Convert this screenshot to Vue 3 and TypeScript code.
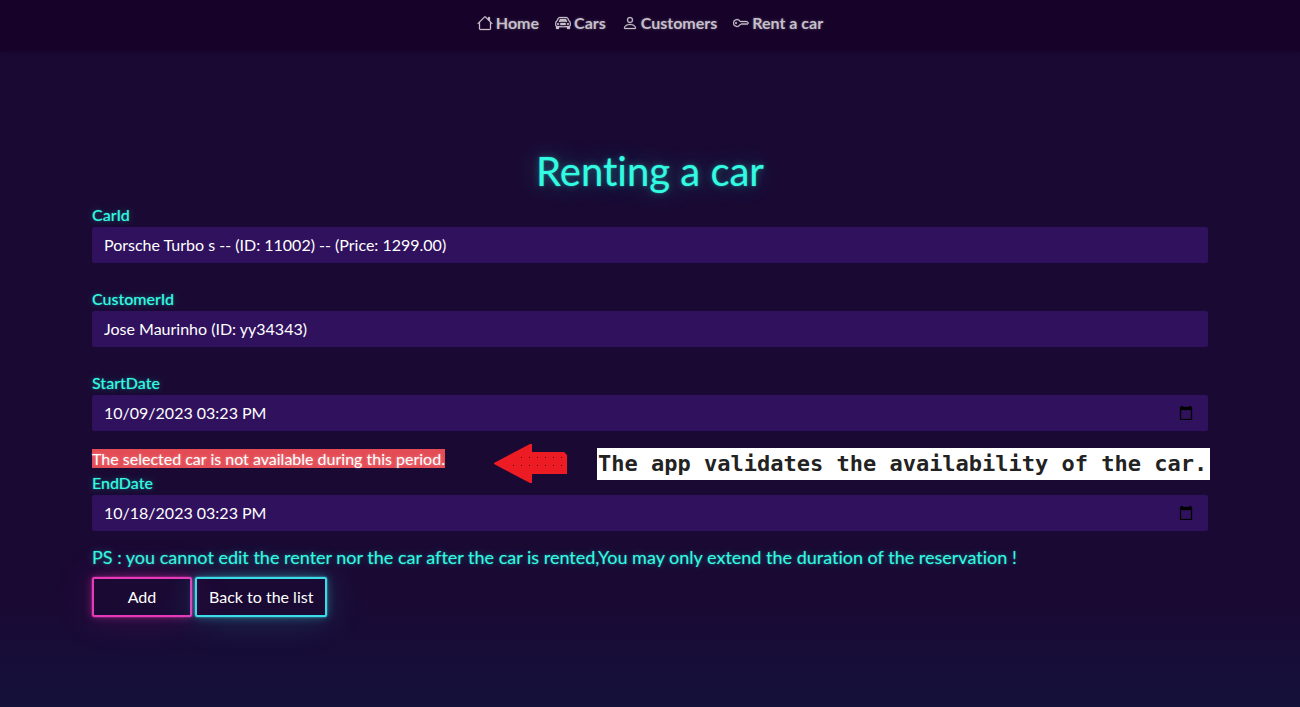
<script setup lang="ts">
import { ref } from 'vue'

interface NavItem {
  label: string
  paths: string[]
}

const navItems: NavItem[] = [
  {
    label: 'Home',
    paths: [
      'M8.707 1.5a1 1 0 0 0-1.414 0L.646 8.146a.5.5 0 0 0 .708.708L2 8.207V13.5A1.5 1.5 0 0 0 3.5 15h9a1.5 1.5 0 0 0 1.5-1.5V8.207l.646.647a.5.5 0 0 0 .708-.708L13 5.793V2.5a.5.5 0 0 0-.5-.5h-1a.5.5 0 0 0-.5.5v1.293L8.707 1.5ZM13 7.207V13.5a.5.5 0 0 1-.5.5h-9a.5.5 0 0 1-.5-.5V7.207l5-5 5 5Z',
    ],
  },
  {
    label: 'Cars',
    paths: [
      'M4 9a1 1 0 1 1-2 0 1 1 0 0 1 2 0Zm10 0a1 1 0 1 1-2 0 1 1 0 0 1 2 0ZM6 8a1 1 0 0 0 0 2h4a1 1 0 1 0 0-2H6ZM4.862 4.276 3.906 6.19a.51.51 0 0 0 .497.731c.91-.073 2.35-.17 3.597-.17 1.247 0 2.688.097 3.597.17a.51.51 0 0 0 .497-.731l-.956-1.913A.5.5 0 0 0 10.691 4H5.309a.5.5 0 0 0-.447.276Z',
      'M2.52 3.515A2.5 2.5 0 0 1 4.82 2h6.362c1 0 1.904.596 2.298 1.515l.792 1.848c.075.175.21.319.38.404.5.25.855.715.965 1.262l.335 1.679c.033.161.049.325.049.49v.413c0 .814-.39 1.543-1 1.997V13.5a.5.5 0 0 1-.5.5h-2a.5.5 0 0 1-.5-.5v-1.338c-1.292.048-2.745.088-4 .088s-2.708-.04-4-.088V13.5a.5.5 0 0 1-.5.5h-2a.5.5 0 0 1-.5-.5v-1.892c-.61-.454-1-1.183-1-1.997v-.413a2.5 2.5 0 0 1 .049-.49l.335-1.68c.11-.546.465-1.012.964-1.261a.807.807 0 0 0 .381-.404l.792-1.848ZM4.82 3a1.5 1.5 0 0 0-1.379.91l-.792 1.847a1.8 1.8 0 0 1-.853.904.807.807 0 0 0-.43.564L1.03 8.904a1.5 1.5 0 0 0-.03.294v.413c0 .796.62 1.448 1.408 1.484 1.555.07 3.786.155 5.592.155 1.806 0 4.037-.084 5.592-.155A1.479 1.479 0 0 0 15 9.611v-.413c0-.099-.01-.197-.03-.294l-.335-1.68a.807.807 0 0 0-.43-.563 1.807 1.807 0 0 1-.853-.904l-.792-1.848A1.5 1.5 0 0 0 11.18 3H4.82Z',
    ],
  },
  {
    label: 'Customers',
    paths: [
      'M8 8a3 3 0 1 0 0-6 3 3 0 0 0 0 6Zm2-3a2 2 0 1 1-4 0 2 2 0 0 1 4 0Zm4 8c0 1-1 1-1 1H3s-1 0-1-1 1-4 6-4 6 3 6 4Zm-1-.004c-.001-.246-.154-.986-.832-1.664C11.516 10.68 10.289 10 8 10c-2.29 0-3.516.68-4.168 1.332-.678.678-.83 1.418-.832 1.664h10Z',
    ],
  },
  {
    label: 'Rent a car',
    paths: [
      'M0 8a4 4 0 0 1 7.465-2H14a.5.5 0 0 1 .354.146l1.5 1.5a.5.5 0 0 1 0 .708l-1.5 1.5a.5.5 0 0 1-.708 0L13 9.207l-.646.647a.5.5 0 0 1-.708 0L11 9.207l-.646.647a.5.5 0 0 1-.708 0L9 9.207l-.646.647A.5.5 0 0 1 8 10h-.535A4 4 0 0 1 0 8zm4-3a3 3 0 1 0 2.712 4.285A.5.5 0 0 1 7.163 9h.63l.853-.854a.5.5 0 0 1 .708 0l.646.647.646-.647a.5.5 0 0 1 .708 0l.646.647.646-.647a.5.5 0 0 1 .708 0l.646.647.793-.793-1-1h-6.63a.5.5 0 0 1-.451-.285A3 3 0 0 0 4 5z',
      'M4 8a1 1 0 1 1-2 0 1 1 0 0 1 2 0z',
    ],
  },
]

const cars = ['Porsche Turbo s -- (ID: 11002) -- (Price: 1299.00)']
const customers = ['Jose Maurinho (ID: yy34343)']

const carId = ref(cars[0])
const customerId = ref(customers[0])
const startDate = ref('10/09/2023 03:23 PM')
const endDate = ref('10/18/2023 03:23 PM')

// Texture dots on the arrow's shaft
const arrowDots = [
  ...[27, 35, 43, 51, 59, 67].map((x) => ({ x, y: 13 })),
  ...[19, 27, 35, 43, 51, 59, 67].map((x) => ({ x, y: 21 })),
]
</script>

<template>
  <div class="page">
    <nav class="navbar">
      <a v-for="item in navItems" :key="item.label" href="#" class="nav-link">
        <svg class="nav-icon" viewBox="0 0 16 16" aria-hidden="true">
          <path v-for="d in item.paths" :key="d" :d="d" />
        </svg>
        <span>{{ item.label }}</span>
      </a>
    </nav>

    <main class="container">
      <h1>Renting a car</h1>
      <form @submit.prevent>
        <div class="field">
          <label for="car">CarId</label>
          <select id="car" v-model="carId" class="control">
            <option v-for="c in cars" :key="c">{{ c }}</option>
          </select>
        </div>
        <div class="field">
          <label for="customer">CustomerId</label>
          <select id="customer" v-model="customerId" class="control">
            <option v-for="c in customers" :key="c">{{ c }}</option>
          </select>
        </div>
        <div class="field start">
          <label for="start">StartDate</label>
          <div class="control date">
            <input id="start" v-model="startDate" type="text" />
            <button type="button" class="picker" aria-label="Pick start date">
              <svg viewBox="0 0 14 14" aria-hidden="true">
                <path d="M2 0h2v1h6V0h2v1h1v13H1V1h1ZM2 4v9h10V4Z" fill-rule="evenodd" />
              </svg>
            </button>
          </div>
        </div>
        <div class="error-row">
          <span class="error">The selected car is not available during this period.</span>
          <div class="callout">
            <svg class="arrow" viewBox="0 0 74 40" aria-hidden="true">
              <path d="M0 19 36 0h2v8h32l3 3v19H38v9h-2L0 20Z" fill="#ed1c24" />
              <rect v-for="(dot, i) in arrowDots" :key="i" :x="dot.x" :y="dot.y" width="1" height="1" fill="#3a0714" />
            </svg>
            <p class="note">The app validates the availability of the car.</p>
          </div>
        </div>
        <div class="field end">
          <label for="end">EndDate</label>
          <div class="control date">
            <input id="end" v-model="endDate" type="text" />
            <button type="button" class="picker" aria-label="Pick end date">
              <svg viewBox="0 0 14 14" aria-hidden="true">
                <path d="M2 0h2v1h6V0h2v1h1v13H1V1h1ZM2 4v9h10V4Z" fill-rule="evenodd" />
              </svg>
            </button>
          </div>
        </div>
        <p class="ps">PS : you cannot edit the renter nor the car after the car is rented,You may only extend the duration of the reservation !</p>
        <div class="actions">
          <button type="submit" class="btn add">Add</button>
          <a href="#" class="btn back">Back to the list</a>
        </div>
      </form>
    </main>
  </div>
</template>

<style>
body {
  margin: 0;
  background: #1a0933;
}
</style>

<style scoped>
.page,
.page * {
  box-sizing: border-box;
}

.page {
  min-height: 100vh;
  font-family: Lato, sans-serif;
  font-size: 16px;
  line-height: 24px;
  font-variant-ligatures: none;
  color: #32fbe2;
  text-shadow: 0 0 2px rgba(50, 251, 226, 0.4), 0 0 8px rgba(50, 251, 226, 0.3);
  background: linear-gradient(#1a0933 0, #1a0933 84%, #14113b 100%);
}

.navbar {
  display: flex;
  flex-wrap: wrap;
  justify-content: center;
  gap: 16px;
  padding: 11px 16px 16px;
  background: #170229;
  box-shadow: 0 0 4px #170229;
}

.nav-link {
  display: flex;
  align-items: center;
  gap: 3px;
  color: #c6c0ca;
  font-weight: 700;
  text-decoration: none;
  text-shadow: 0 0 3px rgba(255, 255, 255, 0.3);
}

.nav-icon {
  width: 16px;
  height: 16px;
  fill: currentColor;
  stroke: currentColor;
  stroke-width: 0.3;
}

.container {
  max-width: 1140px;
  margin: 0 auto;
  padding: 96px 12px 48px;
}

h1 {
  margin: 0 0 8px;
  font-size: 40px;
  line-height: 48px;
  font-weight: 400;
  text-align: center;
  text-shadow: 0 0 2px rgba(50, 251, 226, 0.5), 0 0 8px rgba(50, 251, 226, 0.3), 0 0 30px rgba(50, 251, 226, 0.3);
}

.field {
  margin-bottom: 24px;
}

.field.start {
  margin-bottom: 16px;
}

.field.end {
  margin-bottom: 14px;
}

label {
  display: block;
  font-weight: 500;
}

.control {
  appearance: none;
  display: block;
  width: 100%;
  height: 36px;
  padding: 6px 12px;
  border: 0;
  border-radius: 2px;
  background: #30115e;
  color: #fff;
  font: inherit;
  font-variant-ligatures: none;
  text-shadow: none;
}

.date {
  display: flex;
  align-items: center;
}

.date input {
  flex: 1;
  min-width: 0;
  padding: 0;
  border: 0;
  outline: 0;
  background: transparent;
  color: inherit;
  font: inherit;
}

.picker {
  display: flex;
  margin-right: 3px;
  padding: 0;
  border: 0;
  background: transparent;
  cursor: pointer;
}

.picker svg {
  width: 14px;
  height: 14px;
  fill: #000;
  stroke: #000;
  stroke-width: 0.3;
}

.error-row {
  position: relative;
  height: 24px;
}

.error {
  color: #fff;
  background: #e44c55;
  text-shadow: 0 0 3px rgba(255, 255, 255, 0.4);
}

/* Annotation laid over the form */
.callout {
  position: absolute;
  right: -2px;
  top: -3px;
  display: flex;
  align-items: center;
  gap: 29px;
}

.arrow {
  width: 74px;
  height: 40px;
}

.note {
  width: 613px;
  margin: 0;
  padding: 0 1px;
  background: #fff;
  color: #222;
  font: 700 22px/32px "DejaVu Sans Mono", monospace;
  text-shadow: none;
  white-space: nowrap;
}

.ps {
  margin: 0 0 8px;
  font-size: 18px;
}

.actions {
  display: flex;
  gap: 3px;
}

.btn {
  height: 40px;
  padding: 6px 12px;
  border: 2px solid;
  border-radius: 2px;
  background: transparent;
  font: inherit;
  text-align: center;
  text-decoration: none;
  text-shadow: none;
  cursor: pointer;
}

.add {
  width: 100px;
  color: #fff;
  border-color: #ea39b8;
  box-shadow: 0 0 2px rgba(234, 57, 184, 0.9), 0 0 10px rgba(234, 57, 184, 0.4), 0 0 40px rgba(234, 57, 184, 0.15);
}

.back {
  color: #fff;
  border-color: #3bdbe8;
  box-shadow: 0 0 2px rgba(59, 219, 232, 0.9), 0 0 10px rgba(59, 219, 232, 0.4), 0 0 40px rgba(59, 219, 232, 0.2);
}
</style>
